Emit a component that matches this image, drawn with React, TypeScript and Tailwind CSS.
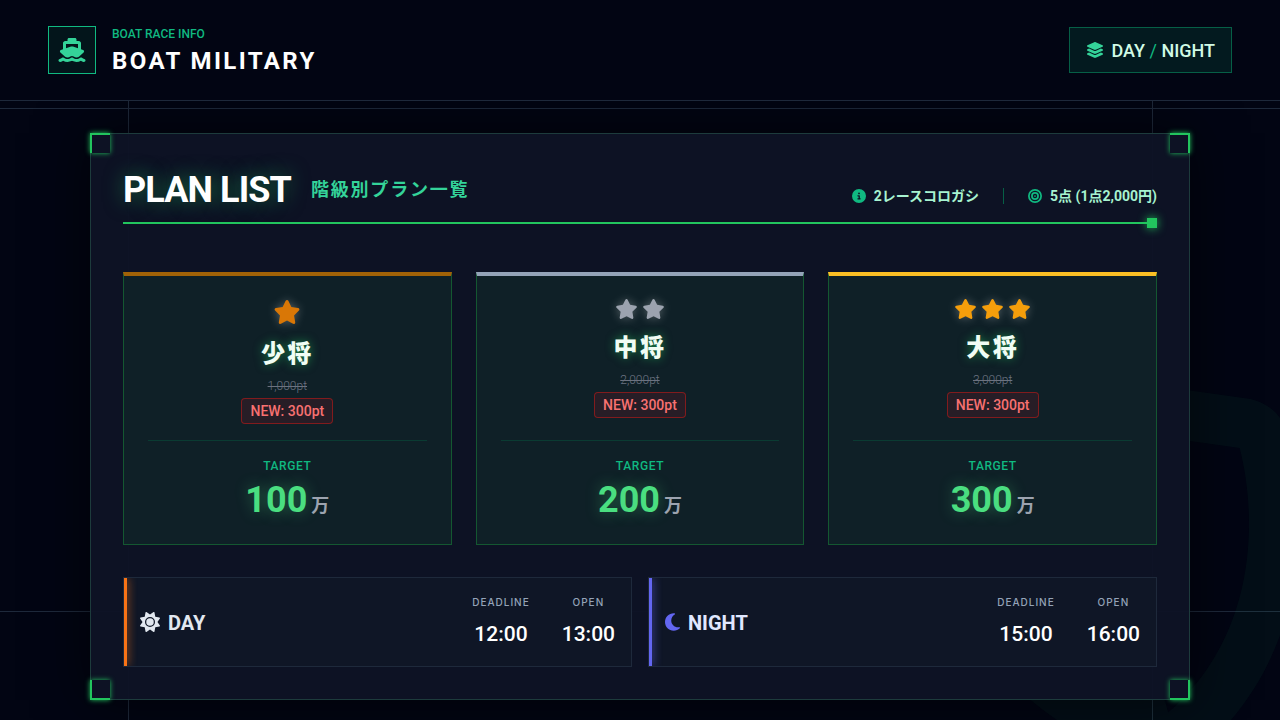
import { memo } from "react";
import type { ReactNode } from "react";
import clsx from "clsx";
import {
  FaBullseye,
  FaCircleInfo,
  FaLayerGroup,
  FaMoon,
  FaShieldHalved,
  FaShip,
  FaStar,
  FaSun,
} from "react-icons/fa6";

const plans = [
  {
    name: "少将",
    stars: 1,
    oldPrice: "1,000pt",
    newPrice: "300pt",
    target: 100,
    border: "border-t-[#a16207]",
    star: "text-[#d97706] w-7 h-6",
    row: "h-8",
  },
  {
    name: "中将",
    stars: 2,
    oldPrice: "2,000pt",
    newPrice: "300pt",
    target: 200,
    border: "border-t-[#94a3b8]",
    star: "text-[#9ca3af] w-[23px] h-5",
    row: "h-[26px]",
  },
  {
    name: "大将",
    stars: 3,
    oldPrice: "3,000pt",
    newPrice: "300pt",
    target: 300,
    border: "border-t-[#fbbf24]",
    star: "text-[#f59e0b] w-[23px] h-5",
    row: "h-[26px]",
  },
];

type Plan = (typeof plans)[number];

const Backdrop = memo(function Backdrop() {
  return (
    <div className="absolute inset-0 overflow-hidden pointer-events-none">
      <div className="absolute inset-y-0 left-[10%] w-px bg-[#1e293b]" />
      <div className="absolute inset-y-0 right-[10%] w-px translate-x-px bg-[#1e293b]" />
      <div className="absolute inset-x-0 top-[15%] h-px bg-[#1e293b]" />
      <div className="absolute inset-x-0 bottom-[15%] h-px bg-[#1e293b]" />
      <FaShieldHalved className="absolute -right-[50px] -bottom-[50px] w-[400px] h-[400px] -rotate-15 text-[#22c55e]/5" />
    </div>
  );
});

const Header = memo(function Header() {
  return (
    <header className="relative z-10 flex items-center justify-between px-12 py-6 border-b border-[#1e293b] bg-[#020513]/98">
      <div className="flex items-center gap-4">
        <div className="w-12 h-12 flex items-center justify-center border border-[#10b981] bg-[#03151b]">
          <FaShip className="w-7 h-6 text-[#34d399]" />
        </div>
        <div className="flex flex-col gap-0.5 pt-0.5">
          <span className="text-xs font-medium text-[#10b981]">BOAT RACE INFO</span>
          <h1 className="pt-0.5 text-2xl leading-[30px] font-bold tracking-widest text-white">BOAT MILITARY</h1>
        </div>
      </div>
      <div className="flex items-center gap-2 px-4 py-2 border border-[#065f46] bg-[#031a1f]">
        <FaLayerGroup className="w-[18px] h-4 text-[#34d399]" />
        <span className="pt-0.5 text-lg leading-[26px] font-medium text-[#d1fae5]">
          DAY <span className="font-normal text-[#10b981]">/</span> NIGHT
        </span>
      </div>
    </header>
  );
});

function Corners() {
  const base = "absolute w-5 h-5 border-[#22c55e] bg-[#0d1224] shadow-[0_0_5px_#22c55e]";
  return (
    <>
      <span className={clsx(base, "-top-px -left-px border-t-2 border-l-2")} />
      <span className={clsx(base, "-top-px -right-px border-t-2 border-r-2")} />
      <span className={clsx(base, "-bottom-px -left-px border-b-2 border-l-2")} />
      <span className={clsx(base, "-bottom-px -right-px border-b-2 border-r-2")} />
    </>
  );
}

function PlanCard({ plan }: { plan: Plan }) {
  return (
    <article
      className={clsx(
        "flex flex-col items-center justify-between px-6 pt-5 pb-6 border border-t-4 border-[#166534]/80 bg-[#0f2027]",
        plan.border
      )}
    >
      <div className="flex flex-col items-center">
        <div className={clsx("flex items-center justify-center gap-1", plan.row)}>
          {Array.from({ length: plan.stars }, (_, i) => (
            <FaStar key={i} className={clsx("drop-shadow-[0_0_5px_rgba(255,255,255,0.3)]", plan.star)} />
          ))}
        </div>
        <h3 className="mt-2.5 text-2xl leading-8 font-black tracking-widest text-[#f0fdf4] [text-shadow:0_0_10px_rgba(34,197,94,0.6)]">
          {plan.name}
        </h3>
        <s className="mt-2 text-xs font-light text-[#6b7280]">{plan.oldPrice}</s>
        <span className="mt-1 px-2 py-0.5 text-sm font-medium rounded border border-[#991b1b]/80 bg-[#271d26] text-[#f87171]">
          NEW: {plan.newPrice}
        </span>
      </div>
      <div className="w-full flex flex-col items-center mt-4 pt-4 border-t border-[#064e3b]/60">
        <span className="text-xs leading-[18px] font-medium tracking-wider text-[#10b981]">TARGET</span>
        <div className="flex items-baseline gap-1 mt-[5px]">
          <span className="text-4xl font-bold text-[#4ade80] [text-shadow:0_0_15px_rgba(74,222,128,0.4)]">
            {plan.target}
          </span>
          <span className="text-lg leading-7 font-bold text-[#9ca3af]">万</span>
        </div>
      </div>
    </article>
  );
}

function Time({ label, value }: { label: string; value: string }) {
  return (
    <div>
      <dt className="font-['Inter',sans-serif] text-[10px] leading-4 font-medium tracking-widest text-[#94a3b8]">{label}</dt>
      <dd className="mt-2 text-[21px] leading-8 font-medium text-white">{value}</dd>
    </div>
  );
}

function Session({ label, icon, bar, deadline, open }: { label: ReactNode; icon: ReactNode; bar: string; deadline: string; open: string }) {
  return (
    <section className="relative overflow-hidden flex items-center justify-between p-4 border border-[#1e293b] bg-[#0f1626]">
      <span className={clsx("absolute inset-y-0 left-0 w-[3px]", bar)} />
      <div className="flex items-center gap-2">
        {icon}
        {label}
      </div>
      <dl className="flex gap-8 text-center">
        <Time label="DEADLINE" value={deadline} />
        <Time label="OPEN" value={open} />
      </dl>
    </section>
  );
}

export default function App() {
  return (
    <div className="relative min-h-screen overflow-hidden bg-[#020513] font-['Roboto','Noto_Sans_CJK_JP',sans-serif]" lang="ja">
      <Backdrop />
      <Header />
      <main className="relative px-12 pt-8 pb-5">
        <div className="relative mx-auto max-w-[1100px] p-8 border border-[#1d3b3c] bg-[#0d1325]/97 shadow-[0_0_50px_rgba(0,0,0,0.6)]">
          <Corners />
          <div className="relative flex items-end justify-between pb-4 border-b-2 border-[#22c55e]">
            <div className="flex items-center gap-5">
              <h2 className="pt-2 text-4xl leading-8 font-bold tracking-tight text-white [text-shadow:0_0_20px_rgba(34,197,94,0.5)]">
                PLAN LIST
              </h2>
              <span className="pt-2 text-lg leading-8 font-bold tracking-widest text-[#34d399]">階級別プラン一覧</span>
            </div>
            <div className="flex items-center gap-6 text-sm font-bold text-[#a7f3d0]">
              <span className="flex items-center gap-2">
                <FaCircleInfo className="text-[#10b981]" />
                2レースコロガシ
              </span>
              <span className="w-px h-4 bg-[#065f46]" />
              <span className="flex items-center gap-2">
                <FaBullseye className="text-[#10b981]" />
                5点 (1点2,000円)
              </span>
            </div>
            <span className="absolute right-0 -bottom-1.5 w-2.5 h-2.5 bg-[#22c55e] shadow-[0_0_10px_#22c55e]" />
          </div>

          <div className="grid grid-cols-3 gap-6 mt-12">
            {plans.map((plan) => (
              <PlanCard key={plan.name} plan={plan} />
            ))}
          </div>

          <div className="grid grid-cols-2 gap-4 mt-8">
            <Session
              label={<h3 className="pt-0.5 text-xl font-bold text-[#e2e8f0]">DAY</h3>}
              icon={<FaSun className="w-5 h-5 text-[#e2e8f0]" />}
              bar="bg-[#f97316] shadow-[0_0_10px_#f97316]"
              deadline="12:00"
              open="13:00"
            />
            <Session
              label={<h3 className="pt-0.5 text-xl font-bold text-[#e0e7ff]">NIGHT</h3>}
              icon={<FaMoon className="w-[15px] h-5 text-[#6366f1]" />}
              bar="bg-[#6366f1] shadow-[0_0_10px_#6366f1]"
              deadline="15:00"
              open="16:00"
            />
          </div>
        </div>
      </main>
    </div>
  );
}
